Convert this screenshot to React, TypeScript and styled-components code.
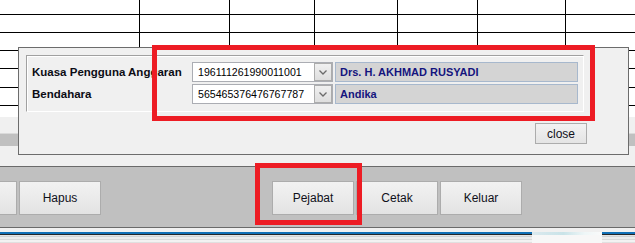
import React from "react";
import styled, { createGlobalStyle } from "styled-components";

const Global = createGlobalStyle`
  html, body { margin: 0; padding: 0; background: #f0f0f0; overflow: hidden; }
  * { box-sizing: border-box; }
`;

const Screen = styled.div`
  position: relative;
  width: 635px;
  height: 243px;
  overflow: hidden;
  display: flex;
  flex-direction: column;
  font-family: "Liberation Sans", Arial, sans-serif;
  background: #f0f0f0;
`;

const Grid = styled.div`
  height: 117px;
  background: #fff;
  display: grid;
  grid-template-columns: 140px 90px 85px 83px 80px 88px 1fr;
  grid-template-rows: 15px 18px 18px 18px 19px 18px 1fr;
`;

const Cell = styled.div<{ $lastCol: boolean; $lastRow: boolean }>`
  border-right: ${(p) => (p.$lastCol ? "none" : "1px solid #000")};
  border-bottom: ${(p) => (p.$lastRow ? "none" : "1px solid #000")};
`;

const Strip = styled.div<{ $h: number }>`
  height: ${(p) => p.$h}px;
  background: #f0f0f0;
`;

const ScrollBand = styled.div`
  height: 13px;
  background: #c0c0c0;
  border-top: 1px solid #dadada;
`;

const Toolbar = styled.div`
  height: 62px;
  background: #c0c0c0;
  border-top: 1px solid #6a6a6a;
  border-bottom: 1px solid #6a6a6a;
  display: flex;
  align-items: flex-start;
  gap: 2px;
  padding-top: 14px;
  overflow: hidden;
`;

const ToolButton = styled.button<{ $offset?: number }>`
  flex: none;
  width: 82px;
  height: 34px;
  margin-left: ${(p) => p.$offset ?? 0}px;
  border: 1px solid #acacac;
  background: linear-gradient(#f2f2f2, #e3e3e3);
  font-family: "Liberation Sans", Arial, sans-serif;
  font-size: 12px;
  color: #10101a;
  padding: 0;
`;

const Spacer = styled.div<{ $w: number }>`
  flex: none;
  width: ${(p) => p.$w}px;
`;

const BottomBand = styled.div`
  margin-top: 4px;
  flex: 1;
  display: flex;
  background: linear-gradient(
    to bottom,
    #1170b6 0 2px,
    #262626 2px 3px,
    #e4e4e4 3px 4px,
    #d2d2d2 4px 5px,
    #ececec 5px 7px,
    #dadada 7px 8px,
    #f2f2f2 8px 10px,
    #e0e0e0 10px 11px,
    #f0f0f0 11px
  );
`;

const Glare = styled.div`
  margin-left: 532px;
  width: 70px;
  background:
    linear-gradient(to bottom, transparent 0 3px, #f7f7f7 3px),
    linear-gradient(to right, #dbe9ee, #c9e3e8 45%, #eef6f7 75%, #fafafa);
`;

const Dialog = styled.div`
  position: absolute;
  left: 18px;
  top: 47px;
  width: 611px;
  height: 108px;
  background: #f0f0f0;
  border: 1px solid #6c6c6c;
  padding: 7px;
  display: flex;
  flex-direction: column;
`;

const GroupBox = styled.div`
  width: 558px;
  height: 57px;
  border: 1px solid;
  border-color: #a0a0a0 #ffffff #ffffff #a0a0a0;
  box-shadow: inset 1px 1px 0 #ffffff;
  padding: 6px 0 0 5px;
  display: grid;
  grid-template-columns: 158px 141px 243px;
  grid-auto-rows: 20px;
  column-gap: 2px;
  row-gap: 2px;
  align-items: center;
`;

const Label = styled.div`
  font-size: 11.5px;
  font-weight: bold;
  color: #0c0c14;
  white-space: nowrap;
  margin-right: -2px;
`;

const Combo = styled.div`
  height: 20px;
  display: flex;
  border: 1px solid #abadb3;
  background: #fff;
`;

const ComboText = styled.div`
  flex: 1;
  font-size: 10.6px;
  color: #000;
  padding-left: 5px;
  line-height: 18px;
  white-space: nowrap;
  overflow: hidden;
`;

const ComboButton = styled.div`
  width: 18px;
  height: 18px;
  border: 1px solid #acacac;
  background: linear-gradient(#f0f0f0, #dedede);
  display: flex;
  align-items: center;
  justify-content: center;
`;

const NameField = styled.div`
  height: 20px;
  background: #d4d4d4;
  border: 1px solid #a7b8cd;
  color: #14147e;
  font-size: 11px;
  font-weight: bold;
  line-height: 18px;
  padding-left: 4px;
  white-space: nowrap;
`;

const CloseRow = styled.div`
  display: flex;
  justify-content: flex-end;
  padding-right: 34px;
  margin-top: 11px;
`;

const CloseButton = styled.button`
  width: 52px;
  height: 21px;
  border: 1px solid #acacac;
  background: linear-gradient(#f2f2f2, #e4e4e4);
  font-family: "Liberation Sans", Arial, sans-serif;
  font-size: 12px;
  color: #10101a;
  padding: 0;
`;

const Annotation = styled.div<{ $x: number; $y: number; $w: number; $h: number }>`
  position: absolute;
  left: ${(p) => p.$x}px;
  top: ${(p) => p.$y}px;
  width: ${(p) => p.$w}px;
  height: ${(p) => p.$h}px;
  border: 5px solid #ed1c24;
  pointer-events: none;
`;

const Chevron = () => (
  <svg width="8" height="5" viewBox="0 0 8 5">
    <polyline points="0.5,0.5 4,4 7.5,0.5" fill="none" stroke="#6b6b6b" strokeWidth="1.3" />
  </svg>
);

const rows = [
  { label: "Kuasa Pengguna Anggaran", nip: "196111261990011001", name: "Drs. H. AKHMAD RUSYADI" },
  { label: "Bendahara", nip: "565465376476767787", name: "Andika" },
];

export default function App() {
  const cells = [];
  for (let r = 0; r < 7; r++) {
    for (let c = 0; c < 7; c++) {
      cells.push(<Cell key={`${r}-${c}`} $lastCol={c === 6} $lastRow={r === 6} />);
    }
  }
  return (
    <>
      <Global />
      <Screen>
        <Grid>{cells}</Grid>
        <Strip $h={16} />
        <ScrollBand />
        <Strip $h={20} />
        <Toolbar>
          <ToolButton $offset={-65} aria-hidden="true" />
          <ToolButton>Hapus</ToolButton>
          <Spacer $w={167} />
          <ToolButton>Pejabat</ToolButton>
          <ToolButton>Cetak</ToolButton>
          <ToolButton>Keluar</ToolButton>
        </Toolbar>
        <BottomBand>
          <Glare />
        </BottomBand>

        <Dialog>
          <GroupBox>
            {rows.map((row) => (
              <React.Fragment key={row.label}>
                <Label>{row.label}</Label>
                <Combo>
                  <ComboText>{row.nip}</ComboText>
                  <ComboButton>
                    <Chevron />
                  </ComboButton>
                </Combo>
                <NameField>{row.name}</NameField>
              </React.Fragment>
            ))}
          </GroupBox>
          <CloseRow>
            <CloseButton>close</CloseButton>
          </CloseRow>
        </Dialog>

        <Annotation $x={152} $y={45} $w={443} $h={76} />
        <Annotation $x={255} $y={163} $w={107} $h={62} />
      </Screen>
    </>
  );
}
